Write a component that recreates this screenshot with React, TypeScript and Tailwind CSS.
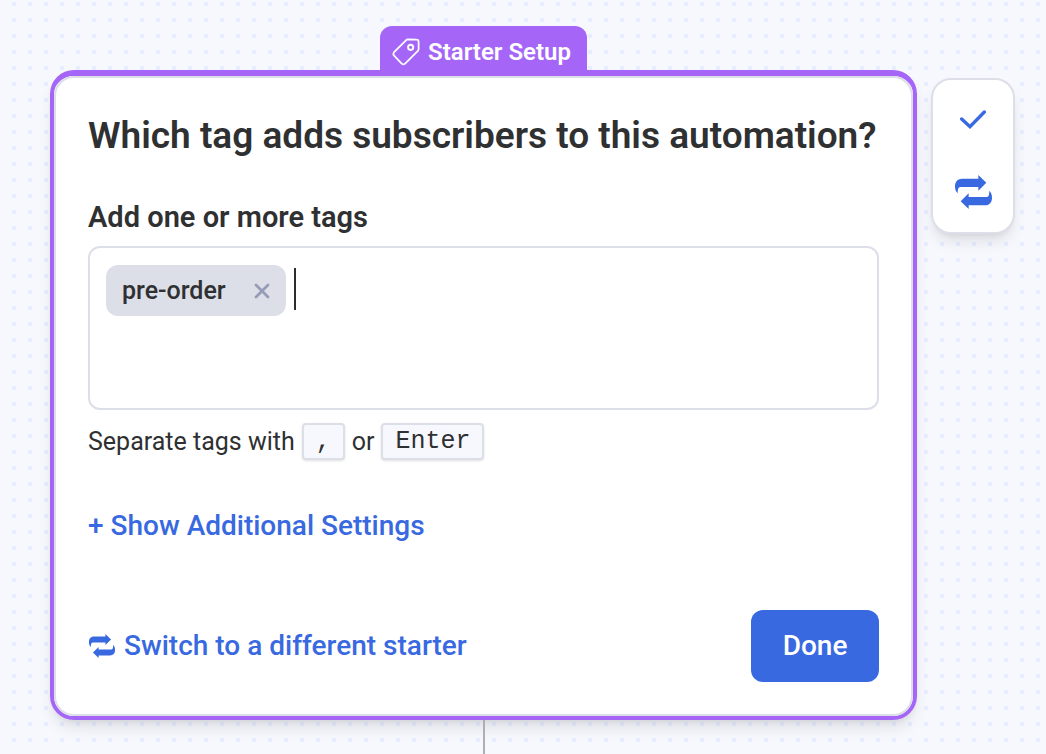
import { useState } from "react";

interface IconProps {
  className?: string;
}

const TagIcon: React.FC<IconProps> = ({ className }) => (
  <svg viewBox="0 0 81 81" fill="none" aria-hidden="true" className={className}>
    <path
      d="M45 4 L71 5 Q77 5 77 11 V32 Q77 35 75 37 L38 74 Q33 78 28 74 L6 51 Q2 46 6 41 L41 6 Q43 4 45 4 Z"
      stroke="currentColor"
      strokeWidth="5"
      strokeLinejoin="round"
    />
    <circle cx="54" cy="27" r="7.5" stroke="currentColor" strokeWidth="5.5" />
  </svg>
);

const SwapIcon: React.FC<IconProps> = ({ className }) => (
  <svg viewBox="0 0 111 102" fill="currentColor" aria-hidden="true" className={className}>
    <path d="M8 55 C2 50 0 42 0 34 C0 20 8 11 22 11 H70 V0 L94 23 L70 47 V36 H17 C10 36 8 42 8 55 Z" />
    <path
      d="M8 55 C2 50 0 42 0 34 C0 20 8 11 22 11 H70 V0 L94 23 L70 47 V36 H17 C10 36 8 42 8 55 Z"
      transform="rotate(180 55.5 51)"
    />
  </svg>
);

const CheckIcon: React.FC<IconProps> = ({ className }) => (
  <svg viewBox="0 0 78 57" fill="none" aria-hidden="true" className={className}>
    <path
      d="M5 27 L30 50 L73 6"
      stroke="currentColor"
      strokeWidth="10"
      strokeLinecap="round"
      strokeLinejoin="miter"
    />
  </svg>
);

const CloseIcon: React.FC<IconProps> = ({ className }) => (
  <svg viewBox="0 0 16 16" fill="none" aria-hidden="true" className={className}>
    <path
      d="M2 2 L14 14 M14 2 L2 14"
      stroke="currentColor"
      strokeWidth="2.8"
      strokeLinecap="round"
    />
  </svg>
);

const Key: React.FC<{ children: React.ReactNode }> = ({ children }) => (
  <kbd className="flex h-[37px] items-center rounded-sm border-2 border-[#dcdfe8] bg-[#f7f8fd] px-3 font-['Liberation_Mono',monospace] text-[25px] leading-8 shadow-sm">
    {children}
  </kbd>
);

/**
 * Tag box: shows the chosen tags as chips and adds a new one
 * when a comma or Enter is typed.
 */
const TagField: React.FC = () => {
  const [tags, setTags] = useState<string[]>(["pre-order"]);
  const [value, setValue] = useState<string>("");

  const handleKeyDown = (e: React.KeyboardEvent<HTMLInputElement>) => {
    if (e.key !== "," && e.key !== "Enter") return;
    e.preventDefault();
    const tag = value.trim();
    if (tag && !tags.includes(tag)) {
      setTags([...tags, tag]);
    }
    setValue("");
  };

  return (
    <div className="mt-[13px] flex min-h-[164px] flex-wrap content-start items-start gap-2 rounded-xl border-2 border-[#dcdfe8] px-4 py-[17px]">
      {tags.map((tag) => (
        <span
          key={tag}
          className="flex h-[51px] items-center gap-7 rounded-xl bg-[#dcdfe8] px-4 text-[25px] leading-8 font-medium"
        >
          {tag}
          <button
            type="button"
            aria-label={`Remove ${tag}`}
            className="text-[#969cb8]"
            onClick={() => setTags(tags.filter((t) => t !== tag))}
          >
            <CloseIcon className="size-4" />
          </button>
        </span>
      ))}
      <div className="flex h-12 min-w-24 flex-1 items-center">
        {value === "" && <span className="h-[42px] w-0.5 bg-[#2d2d2d]" />}
        <input
          id="tags"
          type="text"
          value={value}
          onChange={(e) => setValue(e.target.value)}
          onKeyDown={handleKeyDown}
          className="w-full min-w-0 bg-transparent text-[25px] leading-8 outline-none"
        />
      </div>
    </div>
  );
};

const App: React.FC = () => {
  return (
    <main className="flex min-h-screen items-stretch gap-[14px] bg-[#f7f8fd] bg-[radial-gradient(circle_at_center,#e6edfd_2px,transparent_2.5px)] bg-[size:16px_16px] bg-[position:6px_-4px] pt-[26px] pr-[31px] pl-[50px] font-[Roboto,sans-serif] text-[#2f3032]">
      <div className="flex min-w-0 flex-1 flex-col items-center">
        <div className="flex h-11 items-center gap-2 rounded-t-xl bg-[#a566f8] px-3 pt-2 text-white">
          <TagIcon className="size-7" />
          <span className="pr-1 text-2xl font-semibold">Starter Setup</span>
        </div>

        <section className="w-full rounded-3xl border-4 border-t-6 border-[#a566f8] bg-white shadow-lg">
          <div className="rounded-[20px] border-2 border-[#dcdfe8] p-8">
            <h1 className="mt-1 text-[37px] leading-[44px] font-semibold">
              Which tag adds subscribers to this automation?
            </h1>

            <label
              htmlFor="tags"
              className="mt-[43px] block text-[29px] leading-8 font-semibold"
            >
              Add one or more tags
            </label>
            <TagField />
            <p className="mt-[13px] flex flex-wrap items-center gap-[7px] text-[25px] leading-8">
              Separate tags with <Key>,</Key> or <Key>Enter</Key>
            </p>

            <button
              type="button"
              className="mt-12 block text-[28px] leading-9 font-medium text-[#3869e0]"
            >
              + Show Additional Settings
            </button>

            <div className="mt-[66px] flex items-center justify-between">
              <button
                type="button"
                className="flex items-center gap-2 text-[28px] font-medium text-[#3869e0]"
              >
                <SwapIcon className="h-6 w-7" />
                Switch to a different starter
              </button>
              <button
                type="button"
                className="h-[72px] w-32 rounded-xl bg-[#3869e0] text-[28px] font-medium text-white"
              >
                Done
              </button>
            </div>
          </div>
        </section>

        <div className="w-0.5 flex-1 bg-[#adafb5]" />
      </div>

      <aside className="mt-[52px] flex h-[156px] w-[84px] flex-col items-center justify-between self-start rounded-[20px] border-2 border-[#dcdfe8] bg-white pt-[30px] pb-[23px] text-[#3869e0] shadow-lg">
        <button type="button" aria-label="Done editing">
          <CheckIcon className="h-[19px] w-[26px]" />
        </button>
        <button type="button" aria-label="Switch starter">
          <SwapIcon className="h-[34px] w-[37px]" />
        </button>
      </aside>
    </main>
  );
};

export default App;
